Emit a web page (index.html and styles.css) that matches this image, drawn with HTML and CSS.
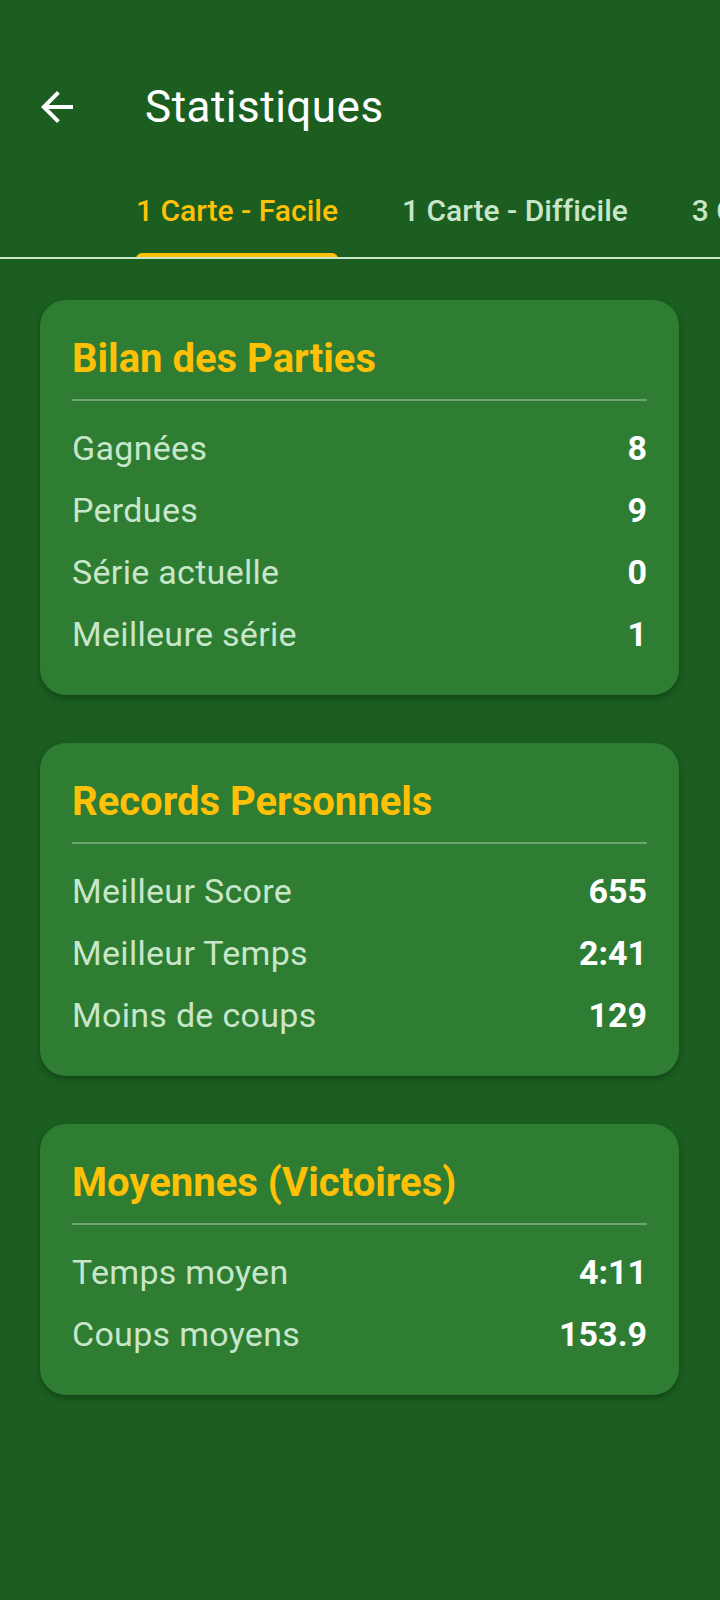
FILE: index.html
```html
<!DOCTYPE html>
<html lang="fr">
<head>
    <meta charset="UTF-8">
    <title>Statistiques</title>
    <link rel="stylesheet" href="styles.css">
</head>
<body>
    <div class="topbar">
        <div class="back">
            <svg width="48" height="48" viewBox="0 0 24 24"><path d="M20 11H7.83l5.59-5.59L12 4l-8 8 8 8 1.41-1.41L7.83 13H20v-2z" fill="#fff"/></svg>
        </div>
        <h1 class="title">Statistiques</h1>
    </div>

    <div class="tabs">
        <div class="tab active"><span>1 Carte - Facile</span><i class="indicator"></i></div>
        <div class="tab"><span>1 Carte - Difficile</span></div>
        <div class="tab"><span>3 Cartes - Facile</span></div>
        <div class="tab"><span>3 Cartes - Difficile</span></div>
    </div>

    <div class="main">
        <div class="card">
            <h2 class="card-title">Bilan des Parties</h2>
            <div class="divider"></div>
            <div class="row"><span class="label">Gagnées</span><span class="value">8</span></div>
            <div class="row"><span class="label">Perdues</span><span class="value">9</span></div>
            <div class="row"><span class="label">Série actuelle</span><span class="value">0</span></div>
            <div class="row"><span class="label">Meilleure série</span><span class="value">1</span></div>
        </div>

        <div class="card">
            <h2 class="card-title">Records Personnels</h2>
            <div class="divider"></div>
            <div class="row"><span class="label">Meilleur Score</span><span class="value">655</span></div>
            <div class="row"><span class="label">Meilleur Temps</span><span class="value">2:41</span></div>
            <div class="row"><span class="label">Moins de coups</span><span class="value">129</span></div>
        </div>

        <div class="card">
            <h2 class="card-title">Moyennes (Victoires)</h2>
            <div class="divider"></div>
            <div class="row"><span class="label">Temps moyen</span><span class="value">4:11</span></div>
            <div class="row"><span class="label">Coups moyens</span><span class="value">153.9</span></div>
        </div>
    </div>
</body>
</html>
```

FILE: styles.css
```css
*{ margin: 0; padding: 0; box-sizing: border-box; }
body{ background: #1b5e20; font-family: Roboto, "Noto Sans", sans-serif; color: #fff; min-height: 1600px; overflow: hidden; }

.topbar{ display: flex; align-items: center; height: 112px; margin-top: 51px; }
.back{ width: 48px; height: 48px; margin-left: 33px; }
.back svg{ display: block; }
.title{ margin-left: 64px; font-size: 44px; font-weight: 400; letter-spacing: 0.5px; color: #fff; }

.tabs{ display: flex; height: 96px; padding-left: 104px; border-bottom: 2px solid #c8e6c9; overflow: hidden; white-space: nowrap; font-variant-ligatures: none; }
.tab{ position: relative; display: flex; align-items: center; padding: 0 32px; font-size: 30px; font-weight: 500; color: #c8e6c9; flex-shrink: 0; }
.tab.active{ color: #ffc107; }
.indicator{ position: absolute; left: 32px; right: 32px; bottom: -2px; height: 6px; background: #ffc107; border-radius: 6px 6px 0 0; }

.main{ padding: 41px 41px 0 40px; display: flex; flex-direction: column; gap: 48px; }
.card{ background: #2e7d32; border-radius: 26px; padding: 32px 32px 30px; box-shadow: 0 3px 6px rgba(0,0,0,0.3); }
.card-title{ font-size: 40px; font-weight: 700; line-height: 54px; color: #ffc107; }
.divider{ height: 2px; background: rgba(255,255,255,0.3); margin: 13px 0 16px; }
.row{ display: flex; justify-content: space-between; align-items: center; height: 62px; font-size: 34px; }
.label{ color: #c8e6c9; letter-spacing: 0.3px; }
.value{ font-weight: 700; color: #fff; }
```
